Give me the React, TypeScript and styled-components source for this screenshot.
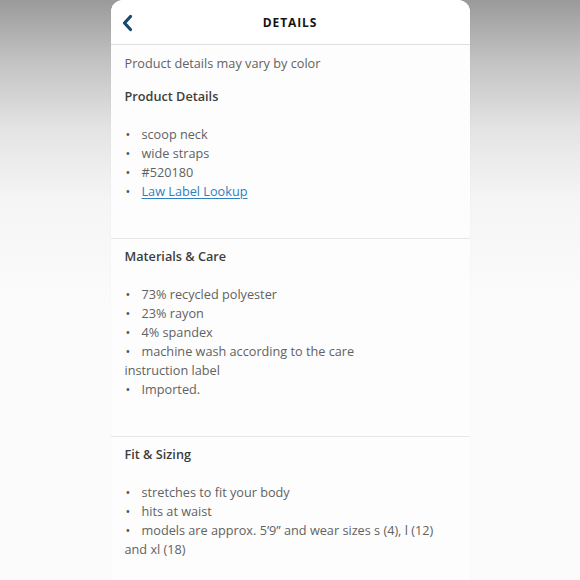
import React from 'react'
import styled, { createGlobalStyle } from 'styled-components'

interface Section {
  title: string
  items: React.ReactNode[]
}

const sections: Section[] = [
  {
    title: 'Product Details',
    items: [
      'scoop neck',
      'wide straps',
      '#520180',
      <LinkText key="law" href="#">Law Label Lookup</LinkText>,
    ],
  },
  {
    title: 'Materials & Care',
    items: [
      '73% recycled polyester',
      '23% rayon',
      '4% spandex',
      <React.Fragment key="wash">
        machine wash according to the care
        <br />
        instruction label
      </React.Fragment>,
      'Imported.',
    ],
  },
  {
    title: 'Fit & Sizing',
    items: [
      'stretches to fit your body',
      'hits at waist',
      <React.Fragment key="models">
        models are approx. 5’9” and wear sizes s (4), l (12)
        <br />
        and xl (18)
      </React.Fragment>,
    ],
  },
]

export default function App() {
  return (
    <>
      <GlobalStyle />
      <Page>
        <Card>
          <Header>
            <BackButton aria-label="Back">
              <svg width="12" height="18" viewBox="0 0 12 18">
                <path
                  d="M9.5 2.5 L3.5 9 L9.5 15.5"
                  fill="none"
                  stroke="#17486e"
                  strokeWidth="3.2"
                  strokeLinecap="round"
                  strokeLinejoin="round"
                />
              </svg>
            </BackButton>
            <Title>DETAILS</Title>
            <span />
          </Header>
          <Body>
            <Intro>Product details may vary by color</Intro>
            {sections.map((section, i) => (
              <Block key={section.title} first={i === 0}>
                <Heading>{section.title}</Heading>
                <List>
                  {section.items.map((item, j) => (
                    <Item key={j}>
                      <Bullet>•</Bullet>
                      {item}
                    </Item>
                  ))}
                </List>
              </Block>
            ))}
          </Body>
        </Card>
      </Page>
    </>
  )
}

const GlobalStyle = createGlobalStyle`
  html, body {
    margin: 0;
    height: 580px;
    overflow: hidden;
  }
  body {
    background: linear-gradient(
      180deg,
      #9a9a9a 0px,
      #c2c2c2 60px,
      #e4e4e4 130px,
      #f5f5f5 200px,
      #fbfbfb 300px
    );
    font-family: 'Open Sans', 'Liberation Sans', sans-serif;
  }
`

const Page = styled.div`
  display: flex;
  justify-content: center;
  height: 580px;
`

const Card = styled.div`
  width: 359px;
  background: #fdfdfd;
  border-radius: 12px 12px 0 0;
  box-shadow: 0 0 1px rgba(0, 0, 0, 0.15);
  overflow: hidden;
`

const Header = styled.div`
  display: grid;
  grid-template-columns: 40px 1fr 40px;
  align-items: center;
  height: 44px;
  background: #fff;
  border-bottom: 1px solid #dedede;
`

const BackButton = styled.button`
  display: flex;
  align-items: center;
  padding: 0 0 0 10px;
  margin: 2px 0 0 0;
  border: 0;
  background: none;
`

const Title = styled.div`
  text-align: center;
  font-size: 12px;
  font-weight: 700;
  letter-spacing: 0.9px;
  color: #141414;
`

const Body = styled.div`
  padding: 0 0 0 14px;
  font-size: 12.7px;
  line-height: 19px;
  color: #626262;
`

const Intro = styled.p`
  margin: 0;
  padding-top: 9px;
`

const Block = styled.section<{ first?: boolean }>`
  margin: 0 0 0 -14px;
  padding: ${props => (props.first ? '14px 14px 37px' : '7.5px 14px 37.5px')};
  border-bottom: 1px solid #e8e8e8;
`

const Heading = styled.h3`
  margin: 0 0 19px;
  font-size: 12.7px;
  line-height: 19px;
  font-weight: 600;
  color: #3d3d3d;
`

const List = styled.ul`
  margin: 0;
  padding: 0;
  list-style: none;
`

const Item = styled.li`
  white-space: nowrap;
`

const Bullet = styled.span`
  display: inline-block;
  width: 17px;
  padding-left: 1px;
  box-sizing: border-box;
  color: #555;
`

function LinkText(props: React.AnchorHTMLAttributes<HTMLAnchorElement>) {
  return <Link {...props} />
}

const Link = styled.a`
  color: #2f7fc1;
  text-decoration: underline;
  text-underline-offset: 2px;
`
